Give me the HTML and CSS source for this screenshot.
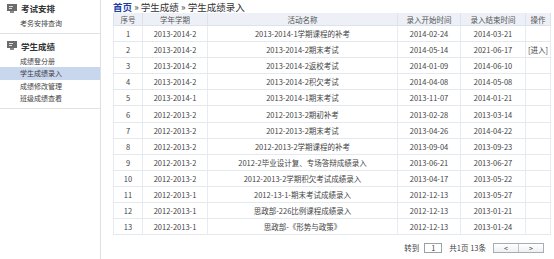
FILE: index.html
```html
<!DOCTYPE html>
<html lang="zh-CN">
<head>
  <meta charset="UTF-8">
  <title>学生成绩录入</title>
  <link rel="stylesheet" href="styles.css">
</head>
<body>
  <div class="sidebar">
    <div class="menu">
      <div class="menu-title">
        <svg class="menu-icon" viewBox="0 0 10 9"><rect x="0" y="0" width="10" height="7" fill="#6b6b6b"/><rect x="2" y="2" width="4" height="1" fill="#ddd"/><rect x="2" y="4" width="3" height="1" fill="#ddd"/><rect x="3" y="7" width="4" height="2" fill="#8a8a8a"/></svg>
        考试安排
      </div>
      <div class="menu-item">考务安排查询</div>
    </div>
    <div class="menu">
      <div class="menu-title">
        <svg class="menu-icon" viewBox="0 0 10 9"><rect x="0" y="0" width="10" height="7" fill="#6b6b6b"/><rect x="2" y="2" width="4" height="1" fill="#ddd"/><rect x="2" y="4" width="3" height="1" fill="#ddd"/><rect x="3" y="7" width="4" height="2" fill="#8a8a8a"/></svg>
        学生成绩
      </div>
      <div class="menu-item">成绩登分册</div>
      <div class="menu-item active">学生成绩录入</div>
      <div class="menu-item">成绩修改管理</div>
      <div class="menu-item">班级成绩查看</div>
    </div>
  </div>

  <div class="main">
    <div class="crumb"><a class="home">首页</a> » 学生成绩 » 学生成绩录入</div>
    <table class="grid">
      <colgroup>
        <col class="c-no"><col class="c-term"><col class="c-name"><col class="c-date"><col class="c-date2"><col class="c-op">
      </colgroup>
      <thead>
        <tr>
          <th>序号</th>
          <th>学年学期</th>
          <th>活动名称</th>
          <th>录入开始时间</th>
          <th>录入结束时间</th>
          <th>操作</th>
        </tr>
      </thead>
      <tbody>
        <tr><td>1</td><td>2013-2014-2</td><td>2013-2014-1学期课程的补考</td><td>2014-02-24</td><td>2014-03-21</td><td></td></tr>
        <tr><td>2</td><td>2013-2014-2</td><td>2013-2014-2期末考试</td><td>2014-05-14</td><td>2021-06-17</td><td class="op">[进入]</td></tr>
        <tr><td>3</td><td>2013-2014-2</td><td>2013-2014-2返校考试</td><td>2014-01-09</td><td>2014-06-10</td><td></td></tr>
        <tr><td>4</td><td>2013-2014-2</td><td>2013-2014-2积欠考试</td><td>2014-04-08</td><td>2014-05-08</td><td></td></tr>
        <tr><td>5</td><td>2013-2014-1</td><td>2013-2014-1期末考试</td><td>2013-11-07</td><td>2014-01-21</td><td></td></tr>
        <tr><td>6</td><td>2012-2013-2</td><td>2012-2013-2期初补考</td><td>2013-02-28</td><td>2013-03-14</td><td></td></tr>
        <tr><td>7</td><td>2012-2013-2</td><td>2012-2013-2期末考试</td><td>2013-04-26</td><td>2014-04-22</td><td></td></tr>
        <tr><td>8</td><td>2012-2013-2</td><td>2012-2013-2学期课程的补考</td><td>2013-09-04</td><td>2013-09-23</td><td></td></tr>
        <tr><td>9</td><td>2012-2013-2</td><td>2012-2毕业设计复、专场答辩成绩录入</td><td>2013-06-21</td><td>2013-06-27</td><td></td></tr>
        <tr><td>10</td><td>2012-2013-2</td><td>2012-2013-2学期积欠考试成绩录入</td><td>2013-04-17</td><td>2013-05-22</td><td></td></tr>
        <tr><td>11</td><td>2012-2013-1</td><td>2012-13-1-期末考试成绩录入</td><td>2012-12-13</td><td>2013-05-27</td><td></td></tr>
        <tr><td>12</td><td>2012-2013-1</td><td>思政部-226比例课程成绩录入</td><td>2012-12-13</td><td>2013-01-21</td><td></td></tr>
        <tr><td>13</td><td>2012-2013-1</td><td>思政部-《形势与政策》</td><td>2012-12-13</td><td>2013-01-24</td><td></td></tr>
      </tbody>
    </table>
    <div class="pager">
      <span>转到</span>
      <span class="page-input">1</span>
      <span>共1页 13条</span>
      <span class="page-btns"><span class="btn">&lt;</span><span class="btn">&gt;</span></span>
    </div>
  </div>
</body>
</html>
```

FILE: styles.css
```css
body {
  margin: 0;
  display: flex;
  height: 259px;
  background: #fff;
  font-family: "Noto Sans CJK SC", "Noto Sans", sans-serif;
  color: #333;
  overflow: hidden;
}
.sidebar {
  width: 100px;
  border-right: 1px solid #dcdfe4;
  flex-shrink: 0;
}
.menu {
  border-bottom: 1px solid #dfe2e7;
  padding: 2px 0 3px;
}
.menu + .menu {
  padding-top: 6px;
}
.menu-title {
  display: flex;
  align-items: center;
  height: 12px;
  padding-left: 7px;
  font-size: 8.5px;
  font-weight: bold;
  color: #333;
  margin-bottom: 3px;
}
.menu-icon {
  width: 10px;
  height: 9px;
  margin-right: 4px;
}
.menu-item {
  height: 12.6px;
  line-height: 12.6px;
  padding-left: 20px;
  font-size: 7px;
  color: #444;
}
.menu-item.active {
  background: #c8d6ee;
}
.main {
  flex: 1;
  min-width: 0;
  padding: 2px 0 0 12px;
}
.crumb {
  height: 11px;
  line-height: 11px;
  font-size: 9.5px;
  color: #333;
}
.home {
  color: #1d3fa8;
  font-weight: bold;
}
.grid {
  width: 437px;
  border-collapse: collapse;
  table-layout: fixed;
  font-size: 7.5px;
  color: #444;
  border-bottom: 1px solid #e1e6ee;
}
.grid th {
  height: 12px;
  padding: 0;
  background: #edf1f7;
  font-weight: normal;
  color: #555;
  border: 1px solid #dde3ec;
  border-top: none;
}
.grid td {
  height: 15.1px;
  padding: 0;
  text-align: center;
  white-space: nowrap;
  overflow: hidden;
  border-bottom: 1px solid #e4e9f0;
  border-left: 1px solid #e8ecf2;
  border-right: 1px solid #e8ecf2;
}
.c-no { width: 29px; }
.c-term { width: 65px; }
.c-name { width: 190px; }
.c-date { width: 63px; }
.c-date2 { width: 65px; }
.c-op { width: 25px; }
.grid td.op {
  text-align: left;
  padding-left: 2px;
}
.pager {
  display: flex;
  align-items: center;
  justify-content: flex-end;
  gap: 5px;
  width: 431px;
  margin-top: 7px;
  font-size: 7.5px;
  color: #444;
}
.page-input {
  width: 16px;
  height: 8px;
  line-height: 8px;
  border: 1px solid #9aa0a8;
  text-align: center;
  margin-right: 2px;
}
.page-btns {
  display: flex;
  border: 1px solid #a8adb5;
  margin-left: 2px;
  background: linear-gradient(#fff, #eef0f3);
}
.btn {
  width: 24px;
  height: 8px;
  line-height: 8px;
  text-align: center;
  font-size: 7px;
}
.btn + .btn {
  border-left: 1px solid #c0c4ca;
}
```
